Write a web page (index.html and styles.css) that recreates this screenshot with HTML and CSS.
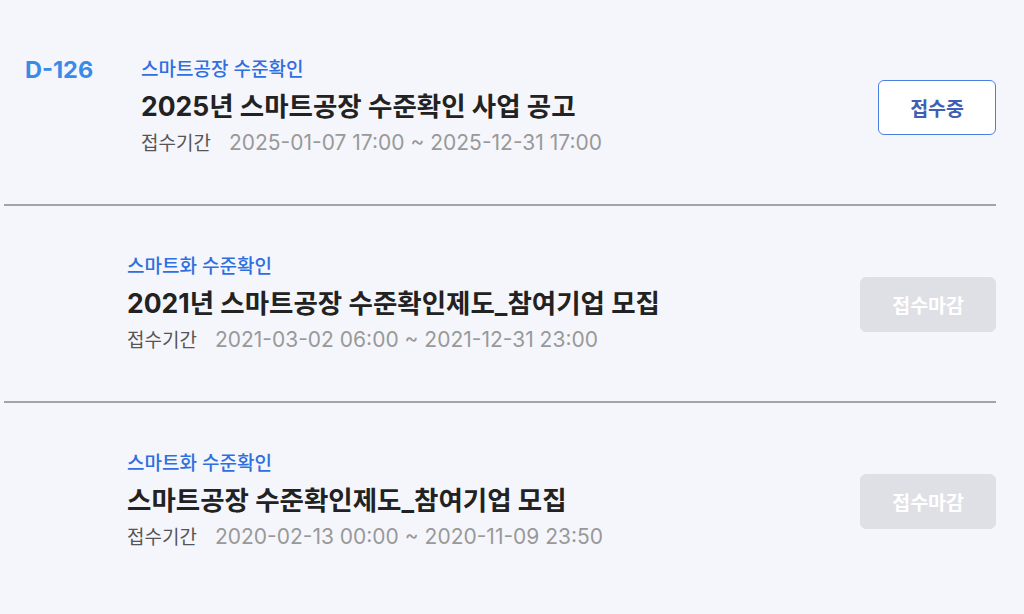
FILE: index.html
```html
<!DOCTYPE html>
<html lang="ko">
<head>
<meta charset="utf-8">
<title>공고 목록</title>
<link rel="stylesheet" href="styles.css">
</head>
<body>
<ul class="list">
  <li class="row">
    <div class="dday">D-126</div>
    <div class="info">
      <div class="category">스마트공장 수준확인</div>
      <div class="title">2025년 스마트공장 수준확인 사업 공고</div>
      <div class="period"><span class="label">접수기간</span><span class="dates">2025-01-07 17:00 ~ 2025-12-31 17:00</span></div>
    </div>
    <button class="status status-open">접수중</button>
  </li>
  <li class="row">
    <div class="dday dday-empty"></div>
    <div class="info">
      <div class="category">스마트화 수준확인</div>
      <div class="title">2021년 스마트공장 수준확인제도_참여기업 모집</div>
      <div class="period"><span class="label">접수기간</span><span class="dates">2021-03-02 06:00 ~ 2021-12-31 23:00</span></div>
    </div>
    <button class="status status-closed">접수마감</button>
  </li>
  <li class="row">
    <div class="dday dday-empty"></div>
    <div class="info">
      <div class="category">스마트화 수준확인</div>
      <div class="title">스마트공장 수준확인제도_참여기업 모집</div>
      <div class="period"><span class="label">접수기간</span><span class="dates">2020-02-13 00:00 ~ 2020-11-09 23:50</span></div>
    </div>
    <button class="status status-closed">접수마감</button>
  </li>
</ul>
</body>
</html>
```

FILE: styles.css
```css
html, body {
  margin: 0;
  padding: 0;
  background: #f5f6fb;
}
body {
  font-family: Inter, "Noto Sans CJK KR", "Noto Sans", sans-serif;
  color: #222;
}
.list {
  list-style: none;
  margin: 0 0 0 4px;
  padding: 9px 0 0 0;
  width: 992px;
}
.row {
  display: flex;
  align-items: center;
  padding: 49px 0 48px 21px;
  border-bottom: 2px solid #a3a4a8;
}
.row:last-child {
  border-bottom: none;
}
.dday {
  width: 116px;
  align-self: flex-start;
  margin-top: -1px;
  font-size: 23.5px;
  font-weight: 700;
  line-height: 26px;
  color: #3a8ae8;
}
.dday-empty {
  width: 102px;
}
.info {
  flex: 1;
  display: flex;
  flex-direction: column;
  gap: 8px;
}
.category {
  font-size: 19px;
  font-weight: 500;
  line-height: 24px;
  color: #2f6fe0;
}
.title {
  font-size: 26.5px;
  font-weight: 700;
  line-height: 32px;
  color: #222;
}
.period {
  display: flex;
  align-items: baseline;
  height: 26px;
  font-size: 19px;
  line-height: 26px;
}
.label {
  color: #555;
  margin-right: 18px;
}
.dates {
  color: #999;
  font-size: 21px;
}
.status {
  height: 55px;
  padding: 0 31px;
  border-radius: 6px;
  font-family: inherit;
  font-size: 19.5px;
  font-weight: 700;
}
.status-open {
  background: #fff;
  border: 1px solid #4a80e2;
  color: #3f5fb5;
}
.status-closed {
  background: #dfe0e5;
  border: 1px solid #dfe0e5;
  color: #fff;
}
```
